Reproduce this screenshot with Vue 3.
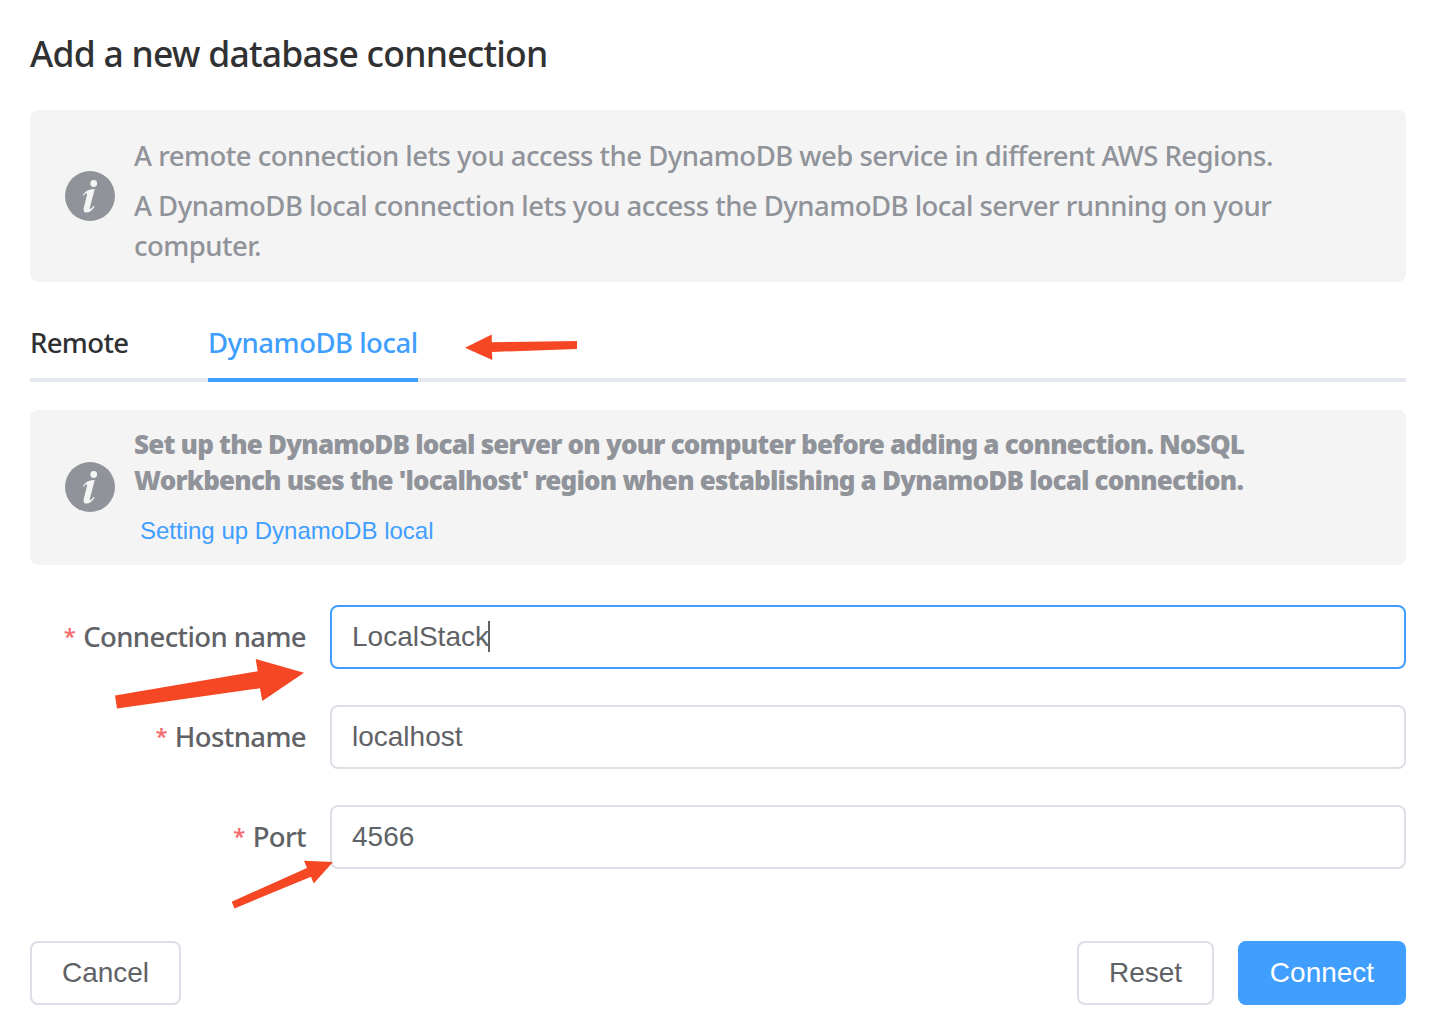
<script setup>
import { ref } from 'vue'

const tabs = ['Remote', 'DynamoDB local']
const activeTab = ref('DynamoDB local')
const fields = [
  { id: 'name', label: 'Connection name', value: 'LocalStack', focused: true },
  { id: 'host', label: 'Hostname', value: 'localhost', focused: false },
  { id: 'port', label: 'Port', value: '4566', focused: false },
]
const infoPath =
  'M99 104C106 94 114 89 124 87L134 86C131 98 125 122 120 140C118 149 124 146 131 136L134 138C127 149 119 156 109 156C101 156 100 149 102 140L111 104C113 96 107 97 101 106Z'
</script>

<template>
  <main class="dialog">
    <h1 class="title">Add a new database connection</h1>

    <section class="notice notice-intro">
      <svg class="info" viewBox="46 33 148 148">
        <circle cx="120" cy="107" r="74" fill="#909399" />
        <circle cx="131" cy="70" r="10" fill="#f4f4f4" />
        <path :d="infoPath" fill="#f4f4f4" />
      </svg>
      <div class="notice-text">
        <p class="l1">A remote connection lets you access the DynamoDB web service in different AWS Regions.</p>
        <p class="l2">A DynamoDB local connection lets you access the DynamoDB local server running on your<br />computer.</p>
      </div>
    </section>

    <nav class="tabs">
      <a v-for="t in tabs" :key="t" class="tab" :class="{ active: t === activeTab }" @click="activeTab = t">{{ t }}</a>
    </nav>

    <section class="notice notice-setup">
      <svg class="info" viewBox="46 33 148 148">
        <circle cx="120" cy="107" r="74" fill="#909399" />
        <circle cx="131" cy="70" r="10" fill="#f4f4f4" />
        <path :d="infoPath" fill="#f4f4f4" />
      </svg>
      <div class="notice-text">
        <p class="strong">Set up the DynamoDB local server on your computer before adding a connection. NoSQL<br />Workbench uses the 'localhost' region when establishing a DynamoDB local connection.</p>
        <a class="link">Setting up DynamoDB local</a>
      </div>
    </section>

    <form class="form" @submit.prevent>
      <div v-for="f in fields" :key="f.id" class="row">
        <label class="label"><span class="star">*</span><span>{{ f.label }}</span></label>
        <div class="input" :class="{ focused: f.focused }">
          <span>{{ f.value }}</span><i v-if="f.focused" class="caret"></i>
        </div>
      </div>
    </form>

    <footer class="footer">
      <button class="btn cancel">Cancel</button>
      <button class="btn reset">Reset</button>
      <button class="btn primary">Connect</button>
    </footer>

    <svg class="arrows" width="1434" height="1028" viewBox="0 0 1434 1028" fill="#f54723">
      <path d="M465 347.8L491.8 334.5V342.2L577 341V349L492 352L492.3 360Z" />
      <path d="M115 695.5L257.7 671.3L255.7 659L304 672.7L262.3 701L260 688.3L117 708.4Z" />
      <path d="M231.7 901.7L307 868L304 860.7L333 862L313.7 883.4L311 876.8L234.5 908.4Z" />
    </svg>
  </main>
</template>

<style>
body {
  margin: 0;
  background: #fff;
}
</style>

<style scoped>
.dialog {
  position: relative;
  box-sizing: border-box;
  width: 1434px;
  height: 1028px;
  padding: 29px 28px 0 30px;
  overflow: hidden;
  display: flex;
  flex-direction: column;
  font-family: 'Noto Sans', sans-serif;
  font-weight: 500;
  font-size: 27.5px;
  color: #303133;
  white-space: nowrap;
}
.title {
  margin: 0 0 33px;
  font-size: 35.5px;
  line-height: 48px;
  font-weight: 500;
  letter-spacing: -0.77px;
}
.notice {
  box-sizing: border-box;
  display: flex;
  align-items: center;
  gap: 19px;
  padding-left: 35px;
  border-radius: 8px;
  background: #f4f4f4;
  color: #909399;
}
.notice-intro {
  height: 172px;
}
.notice-setup {
  height: 155px;
  margin-top: 28px;
}
.info {
  flex: none;
  width: 50px;
  height: 50px;
}
.notice p {
  margin: 0;
  line-height: 40px;
}
.notice-intro .notice-text {
  padding-top: 10px;
}
.l1 {
  letter-spacing: -0.51px;
}
.notice .l2 {
  margin-top: 10px;
  letter-spacing: -0.53px;
}
.notice .strong {
  font-size: 26px;
  line-height: 36px;
  font-weight: 900;
  letter-spacing: -0.81px;
}
.notice-setup .info {
  margin-bottom: 1px;
}
.notice-setup .notice-text {
  margin-bottom: 3px;
}
.link {
  display: block;
  margin: 17px 0 0 6px;
  font: 24px/32px 'Liberation Sans', sans-serif;
  color: #409eff;
}
.tabs {
  display: flex;
  gap: 80px;
  height: 60px;
  margin-top: 40px;
  box-shadow: inset 0 -4px #e4e7ed;
}
.tab {
  box-sizing: border-box;
  height: 60px;
  line-height: 42px;
  letter-spacing: -0.5px;
}
.tab:first-child {
  width: 98px;
  letter-spacing: -0.65px;
}
.tab.active {
  width: 210px;
  color: #409eff;
  border-bottom: 4px solid #409eff;
}
.form {
  display: flex;
  flex-direction: column;
  gap: 36px;
  margin-top: 40px;
}
.row {
  display: flex;
  height: 64px;
}
.label {
  box-sizing: border-box;
  width: 300px;
  padding-right: 24px;
  display: flex;
  justify-content: flex-end;
  gap: 8px;
  line-height: 63px;
  color: #606266;
  letter-spacing: -0.61px;
}
.star {
  color: #f56c6c;
  font-size: 22px;
  font-weight: 600;
  line-height: 60px;
}
.input {
  box-sizing: border-box;
  flex: 1;
  display: flex;
  align-items: center;
  padding-left: 20px;
  border: 2px solid #dcdfe6;
  border-radius: 8px;
  font: 28px/60px 'Liberation Sans', sans-serif;
  color: #606266;
}
.input.focused {
  border-color: #409eff;
}
.caret {
  width: 2px;
  height: 31px;
  margin: 0 0 1px -1px;
  background: #606266;
}
.footer {
  display: flex;
  gap: 24px;
  margin-top: 72px;
}
.btn {
  box-sizing: border-box;
  height: 64px;
  padding: 0;
  border: 2px solid #dcdfe6;
  border-radius: 8px;
  background: #fff;
  color: #606266;
  font: 28px 'Liberation Sans', sans-serif;
}
.cancel {
  width: 151px;
  margin-right: auto;
}
.reset {
  width: 137px;
}
.primary {
  width: 168px;
  border-color: #409eff;
  background: #409eff;
  color: #fff;
}
.arrows {
  position: absolute;
  top: 0;
  left: 0;
  pointer-events: none;
}
</style>
